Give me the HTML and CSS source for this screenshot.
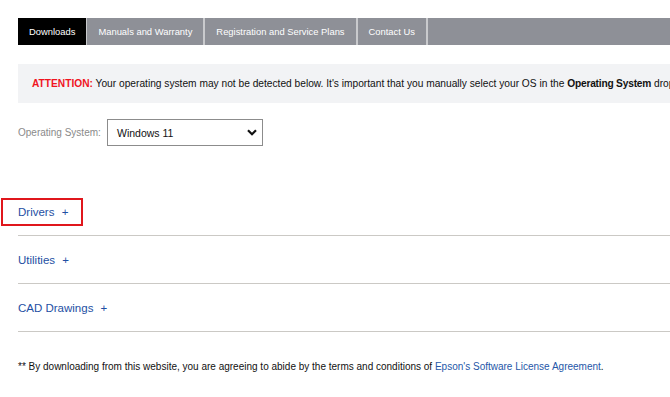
FILE: index.html
```html
<!DOCTYPE html>
<html lang="en">
<head>
    <meta charset="UTF-8">
    <meta name="viewport" content="width=device-width, initial-scale=1.0">
    <title>Downloads</title>
    <link rel="stylesheet" href="styles.css">
</head>
<body>
    <div class="page">
        <ul class="tabs">
            <li class="tab active">Downloads</li>
            <li class="tab">Manuals and Warranty</li>
            <li class="tab">Registration and Service Plans</li>
            <li class="tab">Contact Us</li>
        </ul>

        <div class="notice">
            <p class="notice-text"><span class="alert">ATTENTION:</span> Your operating system may not be detected below. It's important that you manually select your OS in the <b>Operating System</b> drop-down menu below.</p>
        </div>

        <div class="os-row">
            <label class="os-label">Operating System:</label>
            <div class="os-select">
                <span>Windows 11</span>
                <svg width="10" height="7" viewBox="0 0 10 7">
                    <path d="M1 1.2 L5 5.2 L9 1.2" fill="none" stroke="#111" stroke-width="2.2"/>
                </svg>
            </div>
        </div>

        <div class="sections">
            <div class="section">
                <span class="section-title highlighted">Drivers <span class="plus">+</span></span>
            </div>
            <div class="section">
                <span class="section-title">Utilities <span class="plus">+</span></span>
            </div>
            <div class="section">
                <span class="section-title">CAD Drawings <span class="plus">+</span></span>
            </div>
        </div>

        <p class="terms">** By downloading from this website, you are agreeing to abide by the terms and conditions of <a href="#">Epson's Software License Agreement</a>.</p>
    </div>
</body>
</html>
```

FILE: styles.css
```css
body {
    margin: 0;
    font-family: "Liberation Sans", Arial, sans-serif;
    background: #fff;
    overflow: hidden;
}

.page {
    padding: 18px 0 0 18px;
    width: 760px;
}

.tabs {
    display: flex;
    margin: 0;
    padding: 0;
    list-style: none;
    background: #8e9097;
    height: 27px;
}

.tab {
    display: flex;
    align-items: center;
    padding: 0 11px;
    color: #fff;
    font-size: 9.4px;
    background: #8e9097;
    border-right: 2px solid #c9cacd;
}

.tab.active {
    background: #000;
    border-right-width: 1px;
}

.notice {
    margin-top: 19px;
    height: 39px;
    display: flex;
    align-items: center;
    padding-left: 14px;
    background: #f2f3f5;
    overflow: hidden;
}

.notice-text {
    margin: 0;
    font-size: 10.2px;
    color: #111;
    white-space: nowrap;
}

.notice-text b {
    letter-spacing: -0.2px;
}

.alert {
    color: #f0141e;
    font-weight: bold;
}

.os-row {
    display: flex;
    align-items: center;
    margin-top: 16px;
}

.os-label {
    font-size: 10px;
    color: #8a8a8a;
    width: 89px;
}

.os-select {
    width: 140px;
    height: 25px;
    border: 1px solid #8c8c8c;
    display: flex;
    align-items: center;
    justify-content: space-between;
    padding: 0 5px 0 9px;
    font-size: 10.5px;
    color: #111;
}

.sections {
    margin-top: 42px;
    width: 652px;
}

.section {
    height: 47px;
    display: flex;
    align-items: center;
    border-bottom: 1px solid #cbc9c5;
}

.section-title {
    color: #1e4fa3;
    font-size: 11.5px;
    position: relative;
}

.plus {
    margin-left: 4px;
}

.highlighted::after {
    content: "";
    position: absolute;
    left: -17px;
    top: -8px;
    width: 78px;
    height: 24px;
    border: 2px solid #e0161c;
}

.terms {
    margin: 29px 0 0;
    font-size: 10px;
    color: #111;
}

.terms a {
    color: #2557a8;
    text-decoration: none;
}
```
